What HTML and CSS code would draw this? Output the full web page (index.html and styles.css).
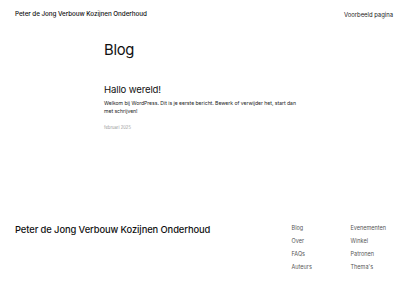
FILE: index.html
```html
<!DOCTYPE html>
<html lang="nl">
<head>
<meta charset="utf-8">
<title>Blog</title>
<link rel="stylesheet" href="styles.css">
</head>
<body>
<header class="site-header">
  <a class="site-title" href="#">Peter de Jong Verbouw Kozijnen Onderhoud</a>
  <nav class="header-nav"><a href="#">Voorbeeld pagina</a></nav>
</header>
<main class="content">
  <h1 class="page-title">Blog</h1>
  <article class="post">
    <h2 class="post-title">Hallo wereld!</h2>
    <p class="post-excerpt">Welkom bij WordPress. Dit is je eerste bericht. Bewerk of verwijder het, start dan met schrijven!</p>
    <div class="post-date">februari 2025</div>
  </article>
</main>
<footer class="site-footer">
  <div class="footer-title">Peter de Jong Verbouw Kozijnen Onderhoud</div>
  <nav class="footer-links">
    <ul class="footer-col">
      <li><a href="#">Blog</a></li>
      <li><a href="#">Over</a></li>
      <li><a href="#">FAQs</a></li>
      <li><a href="#">Auteurs</a></li>
    </ul>
    <ul class="footer-col">
      <li><a href="#">Evenementen</a></li>
      <li><a href="#">Winkel</a></li>
      <li><a href="#">Patronen</a></li>
      <li><a href="#">Thema's</a></li>
    </ul>
  </nav>
</footer>
</body>
</html>
```

FILE: styles.css
```css
* { box-sizing: border-box; }
html, body { margin: 0; padding: 0; background: #fff; }
body {
  font-family: Inter, "Noto Sans", sans-serif;
  color: #111;
  width: 400px;
  height: 300px;
  overflow: hidden;
}
a { color: inherit; text-decoration: none; }

.site-header {
  display: flex;
  justify-content: space-between;
  align-items: center;
  padding: 8px 7px 0 15px;
  height: 20px;
}
.site-title {
  font-size: 6.3px;
  font-weight: 500;
  letter-spacing: -0.05px;
}
.header-nav {
  font-size: 5.9px;
  color: #222;
}

.content {
  width: 192px;
  margin: 0 auto;
  padding-top: 21px;
}
.page-title {
  margin: 0;
  font-size: 14.8px;
  font-weight: 400;
  line-height: 19px;
  letter-spacing: -0.3px;
}
.post { margin-top: 24px; }
.post-title {
  margin: 0;
  font-size: 9.6px;
  font-weight: 400;
  line-height: 12px;
  letter-spacing: -0.15px;
}
.post-excerpt {
  margin: 3px 0 0;
  font-size: 5.1px;
  line-height: 8.3px;
  color: #222;
  letter-spacing: -0.02px;
}
.post-date {
  margin-top: 9px;
  font-size: 4.2px;
  color: #999;
}

.site-footer {
  display: flex;
  justify-content: space-between;
  padding: 0 14px 0 15px;
  margin-top: 89px;
}
.footer-title {
  font-size: 9.4px;
  font-weight: 500;
  letter-spacing: -0.1px;
  padding-top: 5px;
}
.footer-links {
  display: grid;
  grid-template-columns: 59px auto;
  padding-top: 6px;
}
.footer-col {
  list-style: none;
  margin: 0;
  padding: 0;
  display: flex;
  flex-direction: column;
  gap: 6.6px;
  font-size: 5.5px;
  color: #555;
}
.footer-col li { line-height: 6.7px; }
```
